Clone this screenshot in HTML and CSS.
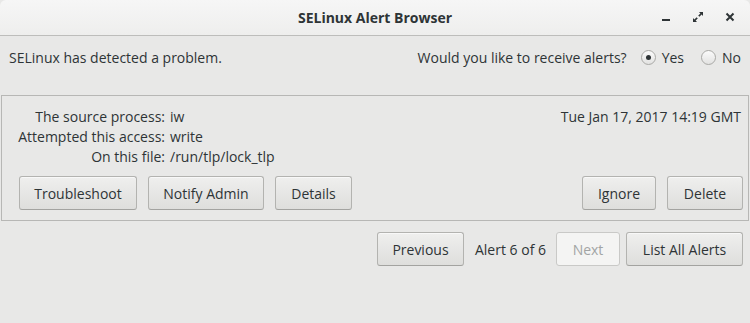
FILE: index.html
```html
<!DOCTYPE html>
<html>
<head>
<meta charset="utf-8">
<link rel="stylesheet" href="styles.css">
</head>
<body>
<div class="window">
  <header class="titlebar">
    <div class="title">SELinux Alert Browser</div>
    <div class="controls">
      <span class="ctl"><svg width="16" height="16" viewBox="0 0 16 16"><rect x="4" y="10" width="8" height="2" fill="#2e3436"/></svg></span>
      <span class="ctl"><svg width="16" height="16" viewBox="0 0 16 16"><path d="M9 3h4v4l-1.4-1.4-2.2 2.2-1.2-1.2 2.2-2.2z M7 13H3V9l1.4 1.4 2.2-2.2 1.2 1.2-2.2 2.2z" fill="#2e3436"/></svg></span>
      <span class="ctl"><svg width="16" height="16" viewBox="0 0 16 16"><path d="M4.5 4.5l7 7M11.5 4.5l-7 7" stroke="#2e3436" stroke-width="2"/></svg></span>
    </div>
  </header>
  <div class="content">
    <div class="toprow">
      <span>SELinux has detected a problem.</span>
      <div class="alerts-q">
        <span>Would you like to receive alerts?</span>
        <label class="radio"><span class="dot checked"></span>Yes</label>
        <label class="radio"><span class="dot"></span>No</label>
      </div>
    </div>
    <div class="frame">
      <div class="inforow">
        <div class="info">
          <span class="lbl">The source process:</span><span>iw</span>
          <span class="lbl">Attempted this access:</span><span>write</span>
          <span class="lbl">On this file:</span><span>/run/tlp/lock_tlp</span>
        </div>
        <div class="date">Tue Jan 17, 2017 14:19 GMT</div>
      </div>
      <div class="btnrow">
        <div class="group">
          <button class="btn w-trouble">Troubleshoot</button>
          <button class="btn w-notify">Notify Admin</button>
          <button class="btn w-details">Details</button>
        </div>
        <div class="group">
          <button class="btn w-ignore">Ignore</button>
          <button class="btn w-delete">Delete</button>
        </div>
      </div>
    </div>
    <div class="navrow">
      <button class="btn w-prev">Previous</button>
      <span class="count">Alert 6 of 6</span>
      <button class="btn w-next" disabled>Next</button>
      <button class="btn w-list">List All Alerts</button>
    </div>
  </div>
</div>
</body>
</html>
```

FILE: styles.css
```css
* { box-sizing: border-box; }
html, body { margin: 0; padding: 0; }
body {
  width: 750px;
  height: 323px;
  background: #e8e8e7;
  font-family: "Open Sans", "Noto Sans", sans-serif;
  font-size: 14px;
  color: #2e3436;
  overflow: hidden;
}
.window {
  width: 750px;
  height: 323px;
  background: #e8e8e7;
  border-radius: 6px 6px 0 0;
  overflow: hidden;
}
.titlebar {
  height: 36px;
  background: linear-gradient(#f6f6f6, #eeeeed);
  border-bottom: 1px solid #bdbdbb;
  position: relative;
  display: flex;
  align-items: center;
  justify-content: center;
}
.title {
  font-weight: bold;
  font-size: 14px;
  color: #2e3436;
}
.controls {
  position: absolute;
  right: 12px;
  top: 9px;
  display: flex;
  gap: 16px;
}
.ctl { width: 16px; height: 16px; display: block; }
.ctl svg { display: block; }
.toprow {
  display: flex;
  justify-content: space-between;
  align-items: flex-start;
  padding: 12px 9px 0 9px;
  height: 59px;
}
.alerts-q { display: flex; align-items: center; }
.alerts-q > span { margin-right: 14px; }
.radio { display: flex; align-items: center; }
.radio + .radio { margin-left: 17px; }
.dot {
  width: 15px; height: 15px;
  border-radius: 50%;
  border: 1px solid #a9a9a6;
  background: linear-gradient(#fbfbfb, #e2e2e1);
  margin-right: 6px;
  position: relative;
}
.dot.checked::after {
  content: "";
  position: absolute;
  left: 4px; top: 4px;
  width: 5px; height: 5px;
  border-radius: 50%;
  background: #2e3436;
}
.frame {
  margin: 0 1px;
  border: 1px solid #b7b7b5;
  height: 126px;
  padding: 11px 5px 0 16px;
}
.inforow { display: flex; justify-content: space-between; }
.info {
  display: grid;
  grid-template-columns: 147px auto;
  column-gap: 5px;
  line-height: 20px;
}
.lbl { text-align: right; }
.date { line-height: 20px; padding-right: 2px; }
.btnrow {
  display: flex;
  justify-content: space-between;
  margin-top: 9px;
  padding-left: 1px;
}
.group { display: flex; gap: 11px; }
.btn {
  font-family: inherit;
  font-size: 14px;
  color: #2e3436;
  height: 34px;
  border: 1px solid #b3b3b0;
  border-bottom-color: #a3a3a0;
  border-radius: 3px;
  background: linear-gradient(#efefee, #dededc);
  box-shadow: inset 0 1px #f8f8f8;
  padding: 0;
}
.btn:disabled {
  color: #a2a4a4;
  background: #f4f4f3;
  border-color: #c9c9c7;
  box-shadow: none;
}
.w-trouble { width: 118px; }
.w-notify { width: 116px; }
.w-details { width: 77px; }
.w-ignore { width: 74px; }
.w-delete { width: 76px; }
.navrow {
  display: flex;
  justify-content: flex-end;
  align-items: center;
  padding: 11px 7px 0 0;
}
.w-prev { width: 87px; }
.count { margin: 0 10px 0 11px; }
.w-next { width: 64px; margin-right: 6px; }
.w-list { width: 117px; }
```
